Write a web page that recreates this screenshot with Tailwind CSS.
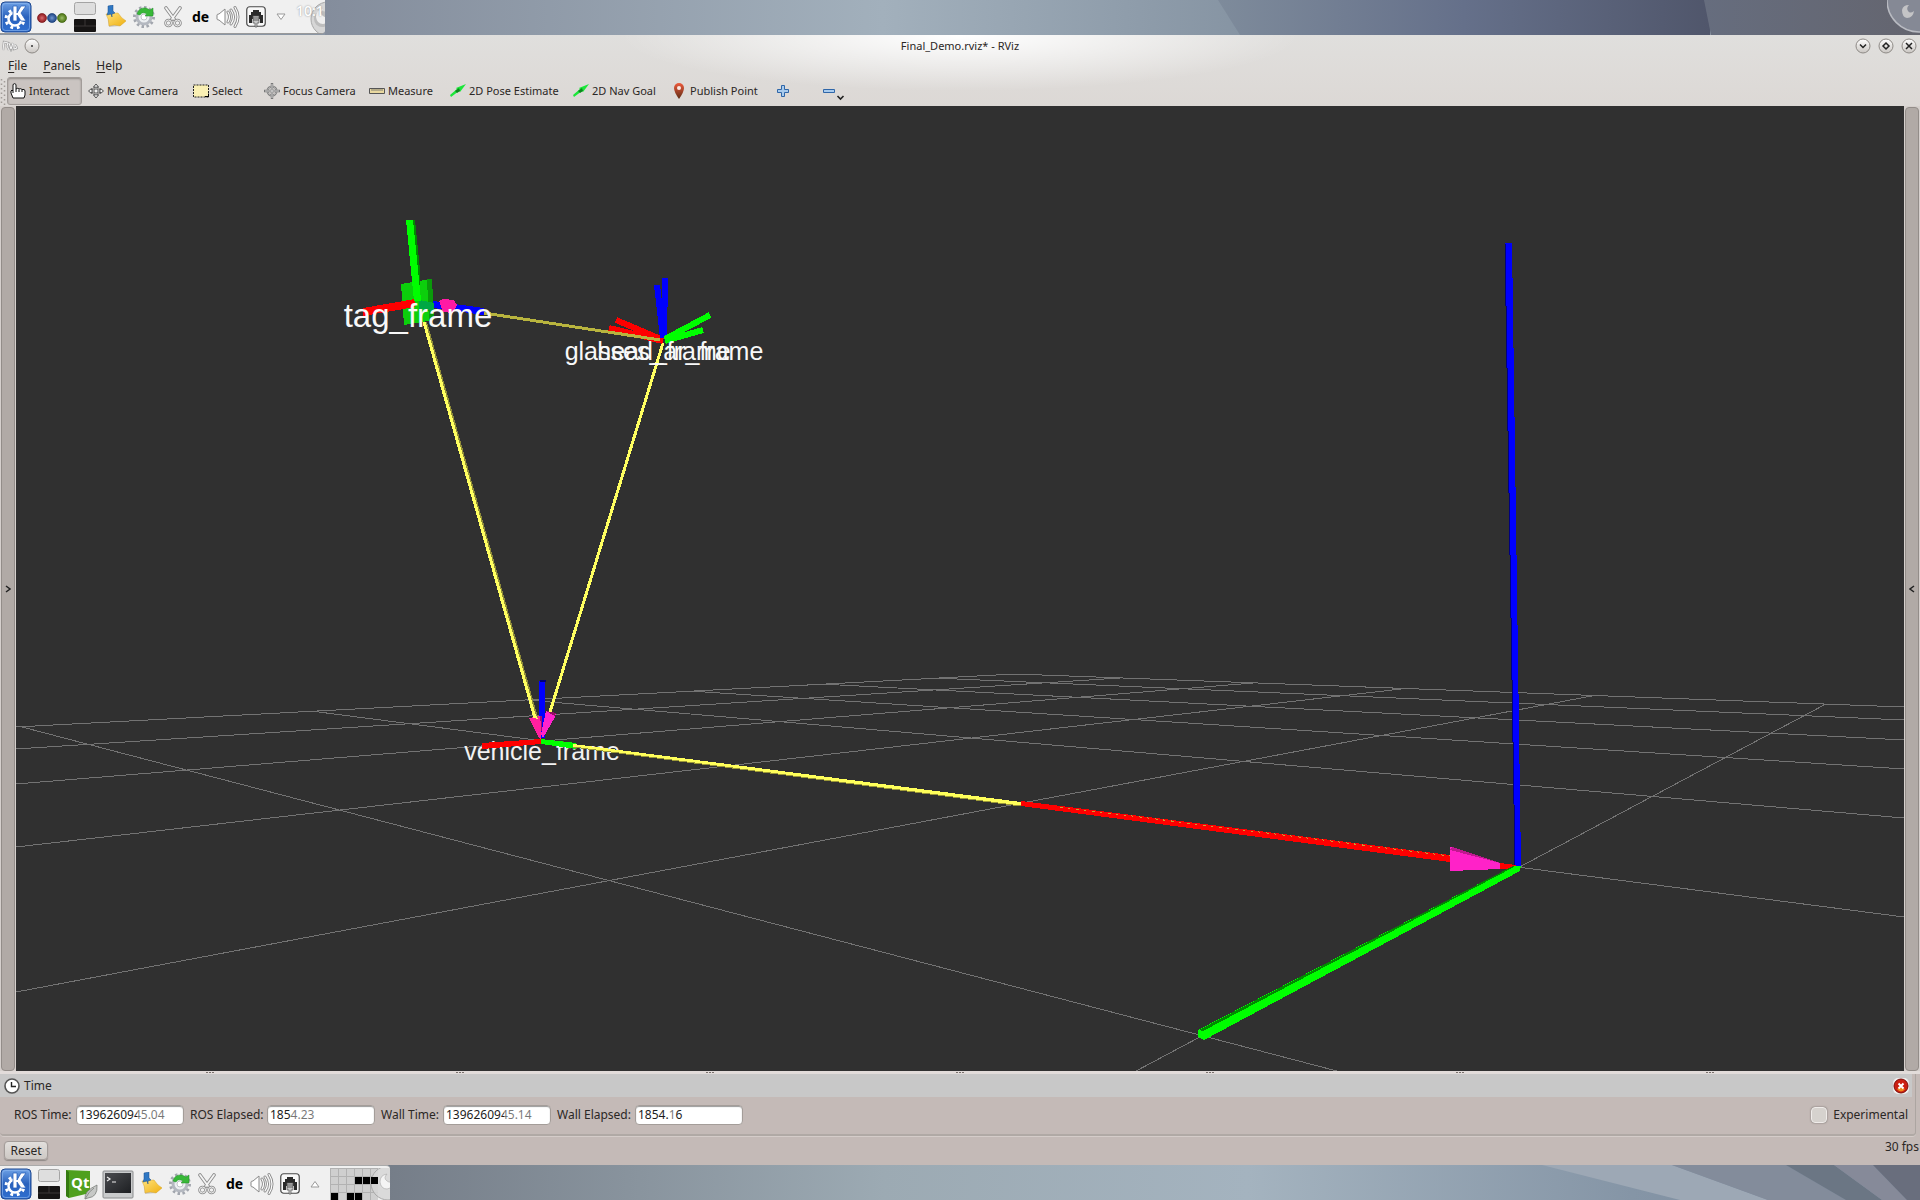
<!DOCTYPE html>
<html lang="en">
<head>
<meta charset="utf-8">
<title>Final_Demo.rviz* - RViz</title>
<script src="https://cdn.jsdelivr.net/npm/@tailwindcss/browser@4"></script>
</head>
<body class="flex h-screen flex-col overflow-hidden bg-[#c4bab7] font-['Noto_Sans',sans-serif] text-xs text-[#2b2725]">

<svg class="absolute size-0" aria-hidden="true">
  <defs>
    <linearGradient id="kblue" x1="0" y1="0" x2="0" y2="1"><stop offset="0" stop-color="#6fa2e6"/><stop offset=".5" stop-color="#2a62bd"/><stop offset="1" stop-color="#2f6fd0"/></linearGradient>
    <linearGradient id="note" x1="0" y1="0" x2="1" y2="1"><stop offset="0" stop-color="#ffe27a"/><stop offset="1" stop-color="#efb012"/></linearGradient>
    <linearGradient id="pin" x1="0" y1="0" x2="0" y2="1"><stop offset="0" stop-color="#ee5a3c"/><stop offset="1" stop-color="#5c2c14"/></linearGradient>
    <linearGradient id="term" x1="0" y1="0" x2="1" y2="1"><stop offset="0" stop-color="#4a4c50"/><stop offset="1" stop-color="#1d1f22"/></linearGradient>
    <linearGradient id="knob" x1="0" y1="0" x2="0" y2="1"><stop offset="0" stop-color="#ffffff"/><stop offset="1" stop-color="#c9c5c1"/></linearGradient>
    <radialGradient id="ball"><stop offset="0" stop-color="#fff" stop-opacity=".35"/><stop offset="1" stop-color="#000" stop-opacity=".25"/></radialGradient>
  </defs>
  <symbol id="kde" viewBox="0 0 32 32">
    <rect x="1" y="1" width="30" height="30" rx="4" fill="url(#kblue)" stroke="#1c468f"/>
    <rect x="2.500" y="2.500" width="27" height="27" rx="3" fill="none" stroke="#8fb9f0" stroke-opacity=".6"/>
    <circle cx="15" cy="18" r="6.500" fill="none" stroke="#fff" stroke-width="2.500" stroke-dasharray="44 16" stroke-dashoffset="-2" pathLength="60"/>
    <circle cx="15" cy="18" r="9" fill="none" stroke="#fff" stroke-width="3" stroke-dasharray="3 4 3 4 3 4 3 4 3 4 3 22" stroke-dashoffset="-3" pathLength="60"/>
    <path d="M13 5h4v7l4-7h5l-5 7 5 8h-5l-4-6v6h-4z" fill="#fff" stroke="#2a62bd" stroke-width=".8"/>
  </symbol>
  <symbol id="pager" viewBox="0 0 22 32">
    <rect x=".5" y="1.500" width="21" height="12" rx="2" fill="#dedede" stroke="#a4a4a4"/>
    <rect x="0" y="18" width="22" height="13" rx="1" fill="#161414"/>
    <path d="M11 18v7M0 25h22" stroke="#3a3636"/>
  </symbol>
  <symbol id="notes" viewBox="0 0 24 24">
    <path d="M4 14l18 1-6 6-11 1z" fill="#c9c9c9"/>
    <path d="M2 9l12-1q3 5 8 8l-6 5q-6-2-11 0 0-7-3-12z" fill="url(#note)" stroke="#dba520" stroke-width=".5"/>
    <path d="M4 1l5-1v6l2 2-3 1v3l-1-3-4 1 1-3z" fill="#2f78c4" stroke="#1a4f8c" stroke-width=".5"/>
  </symbol>
  <symbol id="gear" viewBox="0 0 24 24">
    <circle cx="12" cy="12" r="9.500" fill="none" stroke="#a2a6ae" stroke-width="3" stroke-dasharray="2.500 2.500" pathLength="60"/>
    <circle cx="12" cy="12" r="7" fill="#eceff2" stroke="#b4b8c0" stroke-width="3"/>
    <circle cx="12" cy="12" r="3" fill="#fff" stroke="#c0c4c8"/>
    <path d="M5 9q2-7 9-6l4 2 3-2v8h-8l2-2q-5-3-7 1z" fill="#38b838" stroke="#1f8f27" stroke-width=".5"/>
  </symbol>
  <symbol id="scissors" viewBox="0 0 18 22">
    <path d="M2 2l8 11M16 2L8 13" stroke="#8d8d8d" stroke-width="3.600" stroke-linecap="round"/>
    <path d="M2 2l8 11M16 2L8 13" stroke="#f4f4f4" stroke-width="1.800" stroke-linecap="round"/>
    <circle cx="4.500" cy="17" r="3" fill="none" stroke="#8d8d8d" stroke-width="2.600"/><circle cx="13.500" cy="17" r="3" fill="none" stroke="#8d8d8d" stroke-width="2.600"/>
    <circle cx="4.500" cy="17" r="3" fill="none" stroke="#f4f4f4"/><circle cx="13.500" cy="17" r="3" fill="none" stroke="#f4f4f4"/>
  </symbol>
  <symbol id="speaker" viewBox="0 0 24 24">
    <path d="M1 10q0-1 2-1l6-5v16l-6-5q-2 0-2-1z" fill="#fff" stroke="#8a8a8a"/>
    <path d="M12 7q3 5 0 10M15 5q5 7 0 14M19 2.500q6 9.500 0 19" fill="none" stroke="#8a8a8a" stroke-width="3" stroke-linecap="round"/>
    <path d="M12 7q3 5 0 10M15 5q5 7 0 14M19 2.500q6 9.500 0 19" fill="none" stroke="#fff" stroke-width="1.200" stroke-linecap="round"/>
  </symbol>
  <symbol id="ether" viewBox="0 0 20 22">
    <rect x=".75" y=".75" width="18.500" height="19.500" rx="3" fill="#f8f8f8" stroke="#4a4a4a" stroke-width="1.200"/>
    <path d="M3 9h2V6h2V4h6v2h2v3h2v8h-3v-4H6v4H3z" fill="#2b2b2b"/>
    <path d="M7 10h6v7h-2v4H9v-4H7z" fill="#c8c8c8" stroke="#555" stroke-width=".7"/>
    <path d="M7 12h6M7 14h6" stroke="#333" stroke-width=".7"/>
  </symbol>
  <symbol id="cashew" viewBox="0 0 28 40">
    <circle cx="24" cy="18" r="17" fill="#d6d6d6" stroke="#a8a8a8"/>
    <circle cx="18" cy="18" r="8" fill="#bdbdbd"/>
    <path d="M12 16q0-7 7-8-4 4 0 7t7-2q0 9-7 10-6 0-7-7z" fill="#efefef"/>
  </symbol>
  <symbol id="arrow" viewBox="0 0 16 16">
    <path d="M0 12l7-6-1-1L16 1l-6 8-1-1-8 6z" fill="#1ce63a"/>
    <path d="M5 8l4-3 1 3-3 2z" fill="#0a8a1c"/>
  </symbol>
</svg>

<header class="relative flex h-[35px] shrink-0 overflow-hidden bg-[#8b96a4]">
  <svg class="absolute inset-0 size-full" viewBox="0 0 1920 35" preserveAspectRatio="none" aria-hidden="true">
    <defs><linearGradient id="sky"><stop offset="0" stop-color="#7e8b9b"/><stop offset=".5" stop-color="#65708a"/><stop offset="1" stop-color="#50566b"/></linearGradient>
    <linearGradient id="sky2"><stop offset="0" stop-color="#666d7e"/><stop offset="1" stop-color="#64656f"/></linearGradient>
    <linearGradient id="sky0"><stop offset="0" stop-color="#848d9c"/><stop offset=".6" stop-color="#a2b0bc"/><stop offset="1" stop-color="#8593a2"/></linearGradient></defs>
    <rect x="325" width="930" height="35" fill="url(#sky0)"/>
    <path d="M1218 0H1710V35H1240Z" fill="url(#sky)"/>
    <path d="M1704 0H1920V35H1711Z" fill="url(#sky2)"/>
  </svg>
  <nav class="relative flex h-[34px] w-[325px] items-center overflow-hidden rounded-br border-b border-[#999] bg-[#f0f0f0]" aria-label="Top panel">
    <button class="size-8" aria-label="Application launcher"><svg class="size-8"><use href="#kde"/></svg></button>
    <button class="ml-1 h-8 w-8" aria-label="Activities"><svg class="h-8 w-8" viewBox="0 0 32 32"><g stroke-width=".6"><circle cx="6" cy="17" r="4.500" fill="#c8252b" stroke="#7d1216"/><circle cx="16" cy="17" r="4.500" fill="#2b62b8" stroke="#143c7c"/><circle cx="26" cy="17" r="4.500" fill="#6a9f1c" stroke="#3d6408"/></g><circle cx="6" cy="17" r="4.500" fill="url(#ball)"/><circle cx="16" cy="17" r="4.500" fill="url(#ball)"/><circle cx="26" cy="17" r="4.500" fill="url(#ball)"/></svg></button>
    <button class="ml-1.5 h-8 w-[22px]" aria-label="Desktop pager"><svg class="h-8 w-[22px]"><use href="#pager"/></svg></button>
    <button class="ml-2 size-6" aria-label="Notes"><svg class="size-6"><use href="#notes"/></svg></button>
    <button class="ml-1 size-6" aria-label="Updates"><svg class="size-6"><use href="#gear"/></svg></button>
    <button class="ml-2 h-[22px] w-[18px]" aria-label="Clipboard"><svg class="h-[22px] w-[18px]"><use href="#scissors"/></svg></button>
    <button class="ml-2.5 w-4 text-sm font-bold text-black" aria-label="Keyboard layout de">de</button>
    <button class="ml-2 size-6" aria-label="Volume"><svg class="size-6"><use href="#speaker"/></svg></button>
    <button class="ml-1.5 h-[22px] w-5" aria-label="Network"><svg class="h-[22px] w-5"><use href="#ether"/></svg></button>
    <button class="ml-2.5 h-2 w-2.5" aria-label="Show hidden icons"><svg class="h-2 w-2.5" viewBox="0 0 10 8"><path d="M1 1h8L5 6.500z" fill="#fff" stroke="#999"/></svg></button>
    <span class="relative ml-2.5 h-8 w-7 shrink-0">
      <svg class="absolute top-0 left-2 h-10 w-7"><use href="#cashew"/></svg>
      <span class="absolute top-0 left-0 text-sm font-medium text-white [text-shadow:0_0_2px_#888]">10:1</span>
    </span>
  </nav>
  <button class="relative ml-auto h-[35px] w-[33px]" aria-label="Panel toolbox"><svg class="h-[35px] w-[33px]" viewBox="0 0 33 35"><circle cx="32" cy="0" r="32" fill="#858995" stroke="#b9bbc2" stroke-width="1.500"/><path d="M15 10q1-5 7-5-3 3-1 6t6 0q-1 7-7 7-5-1-5-8z" fill="#c4c4c6"/></svg></button>
</header>

<section class="flex h-[71px] shrink-0 flex-col bg-[radial-gradient(ellipse_340px_56px_at_50%_0,#fff,#fff0),linear-gradient(#e0dfdd,#dcd8d5)]">
  <div class="grid h-[21px] shrink-0 grid-cols-[1fr_auto_1fr] items-center">
    <div class="flex items-center gap-1.5 pl-0.5">
      <svg class="h-3 w-4" viewBox="0 0 16 12" aria-hidden="true"><path d="M1 10l1-8 4 1-1 3 2 4M7 3l2 6 2-6M12 4v5l3-1-2-3" fill="none" stroke="#aaa" stroke-width="2.500"/><path d="M1 10l1-8 4 1-1 3 2 4M7 3l2 6 2-6M12 4v5l3-1-2-3" fill="none" stroke="#f4f4f4"/></svg>
      <button aria-label="Window menu"><svg class="size-4" viewBox="0 0 16 16"><circle cx="8" cy="8" r="7" fill="url(#knob)" stroke="#8e8a86"/><circle cx="8" cy="8" r="1" fill="#333"/></svg></button>
    </div>
    <h1 class="pt-0.5 text-[11px]">Final_Demo.rviz* - RViz</h1>
    <div class="flex justify-end gap-[7px] pr-[3px]">
      <button aria-label="Minimize"><svg class="size-4" viewBox="0 0 16 16"><circle cx="8" cy="8" r="7" fill="url(#knob)" stroke="#8e8a86"/><path d="M5 6.500l3 3 3-3" fill="none" stroke="#222" stroke-width="1.500"/></svg></button>
      <button aria-label="Maximize"><svg class="size-4" viewBox="0 0 16 16"><circle cx="8" cy="8" r="7" fill="url(#knob)" stroke="#8e8a86"/><path d="M8 5l3 3-3 3-3-3z" fill="none" stroke="#222" stroke-width="1.500"/></svg></button>
      <button aria-label="Close"><svg class="size-4" viewBox="0 0 16 16"><circle cx="8" cy="8" r="7" fill="url(#knob)" stroke="#8e8a86"/><path d="M5 5l6 6M11 5l-6 6" stroke="#222" stroke-width="1.500"/></svg></button>
    </div>
  </div>
  <nav class="flex h-5 shrink-0 items-center gap-4 pl-2 leading-5" aria-label="Menu bar">
    <button><span class="underline underline-offset-2">F</span>ile</button>
    <button><span class="underline underline-offset-2">P</span>anels</button>
    <button><span class="underline underline-offset-2">H</span>elp</button>
  </nav>
  <div class="flex h-[30px] shrink-0 items-center text-[11px]" role="toolbar" aria-label="Tools">
    <svg class="h-7 w-[7px] shrink-0" viewBox="0 0 7 28" aria-hidden="true"><path d="M1.500 2v26M4.500 4v24" stroke="#a19b97" stroke-width="1.500" stroke-dasharray="1.500 3"/></svg>
    <button class="mr-[3px] flex h-7 w-[75px] items-center gap-[3px] rounded-[3px] border border-[#a29c99] bg-[#cac4c1] pl-0.5 shadow-[inset_0_1px_2px_#8f8986]"><svg class="size-4" viewBox="0 0 16 16"><path d="M3 15l-2-5V8l1-1 1 1V1.500Q5-.3 6 1.500V6q2-1.500 3 0 2-.8 3 .5 3-.8 3 1.500v4l-1 3z" fill="#fff" stroke="#111"/><path d="M3 8v2M6 6v3M9 6.500v2.500M12 7v2" stroke="#111"/></svg>Interact</button>
    <button class="flex h-7 w-[105px] items-center gap-[3px] pl-[3px]"><svg class="size-4" viewBox="0 0 16 16"><path d="M8 1l2.500 3H9v3h3.500V5.500L15.500 8l-3 2.500V9H9v3h1.500L8 15l-2.500-3H7V9H3.500v1.500L.5 8l3-2.500V7H7V4H5.500z" fill="#eee" stroke="#555"/><circle cx="8" cy="8" r="4" fill="none" stroke="#666" stroke-width=".9"/></svg>Move Camera</button>
    <button class="flex h-7 w-[71px] items-center gap-[3px] pl-[3px]"><svg class="size-4" viewBox="0 0 16 16"><path d="M.5 2h15v12H.5z" fill="#faf0b4" stroke="#222" stroke-dasharray="2 1"/><path d="M12 14h4v-4l-1 1v2h-3z" fill="#000"/></svg>Select</button>
    <button class="flex h-7 w-[105px] items-center gap-[3px] pl-[3px]"><svg class="size-4" viewBox="0 0 16 16"><circle cx="8" cy="8" r="4.500" fill="none" stroke="#777" stroke-width="2"/><circle cx="8" cy="8" r="4.500" fill="none" stroke="#ddd" stroke-width=".6"/><path d="M8 0v16M0 8h16" stroke="#777" stroke-width="2.400"/><path d="M8 1v14M1 8h14" stroke="#eee" stroke-width=".8"/></svg>Focus Camera</button>
    <button class="flex h-7 w-[81px] items-center gap-[3px] pl-[3px]"><svg class="size-4" viewBox="0 0 16 16"><path d="M.5 5.500h15v5H.5z" fill="#ead9a0" stroke="#555"/><path d="M3 6v2M5 6v2M7 6v2M9 6v2M11 6v2M13 6v2" stroke="#666" stroke-width=".8"/></svg>Measure</button>
    <button class="flex h-7 w-[123px] items-center gap-[3px] pl-[3px]"><svg class="size-4"><use href="#arrow"/></svg>2D Pose Estimate</button>
    <button class="flex h-7 w-[98px] items-center gap-[3px] pl-[3px]"><svg class="size-4"><use href="#arrow"/></svg>2D Nav Goal</button>
    <button class="flex h-7 w-[104px] items-center gap-[3px] pl-[3px]"><svg class="size-4" viewBox="0 0 16 16"><path d="M8 16Q3 9 3 5a5 5 0 0 1 10 0q0 4-5 11z" fill="url(#pin)"/><circle cx="8" cy="5" r="2" fill="#fbe9e4"/></svg>Publish Point</button>
    <button class="flex h-7 w-[46px] items-center pl-[3px]" aria-label="Add tool"><svg class="size-4" viewBox="0 0 16 16"><path d="M6.500 2.500h3v4h4v3h-4v4h-3v-4h-4v-3h4z" fill="#a8cbee" stroke="#2f66a8"/></svg></button>
    <button class="flex h-7 w-8 items-center pl-[3px]" aria-label="Remove tool"><svg class="h-5 w-6" viewBox="0 0 24 20"><path d="M2.500 8.500h11v3h-11z" fill="#a8cbee" stroke="#2f66a8"/><path d="M16.500 15l3 3 3-3" fill="none" stroke="#222" stroke-width="1.600"/></svg></button>
  </div>
</section>

<main class="flex min-h-0 flex-1 bg-[#d6d0cd]">
  <button class="flex w-4 shrink-0 items-center justify-center px-px pt-px" aria-label="Show left panels"><span class="flex size-full items-center justify-center rounded border border-[#938d89] bg-[#b1aaa6]"><svg class="h-2 w-1.5" viewBox="0 0 6 8"><path d="M1 1l4 3-4 3" fill="none" stroke="#222" stroke-width="1.500"/></svg></span></button>
  <svg class="h-full min-w-0 flex-1 bg-[#303030]" viewBox="16 106 1888 965" preserveAspectRatio="xMidYMid slice" role="img" aria-label="3D view of the coordinate frames">
    <g stroke="#737373" fill="none" shape-rendering="crispEdges">
      <path d="M16 727L1015 674M16 749L1120 678M16 784L1253 683M16 847L1410 688M16 992L1597 695M1136 1071L1826 704"/>
      <path d="M1015 674L1904 707M934 678L1904 720M820 684L1904 740M689 691L1904 769M527 700L1904 818M311 711L1904 917M22 727L1337 1071"/>
    </g>
    <g class="font-['Liberation_Sans',sans-serif]" fill="#f2f2f2" text-anchor="middle">
      <text x="542" y="760" font-size="25">vehicle_frame</text>
    </g>
    <g shape-rendering="crispEdges">
      <path d="M425 322L536 718" stroke="#8f8c38" stroke-width="4"/>
      <path d="M424 322L535 718" stroke="#ffff60" stroke-width="3"/>
      <path d="M663 343L550 712" stroke="#ffff60" stroke-width="3"/>
      <path d="M539 681h6v57h-6z" fill="#0000fe"/><path d="M540 680h6v2h-6z" fill="#000070"/>
      <path d="M529 718L541 716V740L539 738Z" fill="#ff1fa0"/><path d="M540 716h2v20z" fill="#a01070"/>
      <path d="M546 711L556 713 555 717 543 738 541 734Z" fill="#ff22cc"/><path d="M546 711L556 713 555 716Z" fill="#901060"/>
      <path d="M533 718l2-5 3 6z" fill="#ffff60"/>
      <path d="M482 743L541 739V744L482 749Z" fill="#fe0000"/>
      <path d="M541 739L576 743V749L541 744Z" fill="#00fe00"/>
      <path d="M573 744L1021 802V806L573 747Z" fill="#ffff5a"/><path d="M573 747L1021 806" stroke="#9c9838"/>
      <path d="M1021 801L1450 855V862L1021 806Z" fill="#fe0000"/>
      <path d="M1060 807L1450 856" stroke="#c9a030" stroke-dasharray="3 5 2 6"/>
      <path d="M1505 243H1512L1521 866H1515Z" fill="#0000fe"/><path d="M1505 243L1515 866" stroke="#000080"/>
      <path d="M1500 863L1516 865 1515 870 1500 869Z" fill="#fe0000"/>
      <path d="M1450 847L1500 863V869L1450 871Z" fill="#ff22c8"/><path d="M1452 847L1500 863 1450 850Z" fill="#c01890"/>
      <path d="M1513 866L1521 866 1520 871 1204 1040 1198 1037V1030Z" fill="#00fe00"/><path d="M1513 866L1199 1030 1203 1031 1514 867Z" fill="#008a00"/>
    </g>
    <g shape-rendering="crispEdges">
      <path d="M433 301L484 308V315L433 308Z" fill="#0000fe"/>
      <path d="M401 284L431 279 434 320 404 325Z" fill="#0ccf0c"/><path d="M427 279L432 279 434 320 429 321Z" fill="#0a9a0a"/>
      <path d="M419 300L434 303V311L419 309Z" fill="#00a844"/>
      <path d="M363 308L415 299V307L363 316Z" fill="#fe0000"/>
      <path d="M406 220H414L421 301H414Z" fill="#00fe00"/><path d="M413 220H415L420 270V290Z" fill="#008a00"/>
      <path d="M439 301L443 299 454 300 457 305 453 313 443 312Z" fill="#ff1aa4"/>
      <path d="M484 313L660 340" stroke="#b8b43e" stroke-width="3"/>
      <path d="M616 320L663 340M609 328L663 341" stroke="#fe0000" stroke-width="6"/>
      <path d="M609 332L660 340" stroke="#b8b43e" stroke-width="3"/>
      <path d="M665 278L664 338M657 285L663 338" stroke="#0000fe" stroke-width="6"/>
      <path d="M710 315L665 339M703 330L665 341" stroke="#00fe00" stroke-width="6"/>
    </g>
    <g class="font-['Liberation_Sans',sans-serif]" fill="#f8f8f8" text-anchor="middle">
      <text x="418" y="327" font-size="33">tag_frame</text>
      <text x="664" y="360" font-size="25">glasses_ar_frame</text>
      <text x="664" y="360" font-size="25">head_frame</text>
    </g>
  </svg>
  <button class="flex w-4 shrink-0 items-center justify-center px-px pt-px" aria-label="Show right panels"><span class="flex size-full items-center justify-center rounded border border-[#938d89] bg-[#b1aaa6]"><svg class="h-2 w-1.5" viewBox="0 0 6 8"><path d="M5 1L1 4l4 3" fill="none" stroke="#222" stroke-width="1.500"/></svg></span></button>
</main>

<svg class="h-[3px] w-full shrink-0 bg-[#e2dcda]" aria-hidden="true"><defs><pattern id="grips" x="85" width="250" height="3" patternUnits="userSpaceOnUse"><path d="M121 1h2v1h-2zM124 1h2v1h-2zM127 1h2v1h-2z" fill="#77706c"/></pattern></defs><rect width="100%" height="3" fill="url(#grips)"/></svg>

<section class="shrink-0" aria-label="Time panel">
  <div class="mr-1 rounded-b border-r border-b-2 border-[#aca5a1] border-b-[#b0a9a5] pr-[3px] shadow-[0_1px_0_#d4ccc9]">
    <div class="flex h-[23px] items-center bg-[#c8c8c8] pr-[3px] pl-1">
      <svg class="size-4" viewBox="0 0 16 16" aria-hidden="true"><circle cx="8" cy="8" r="7" fill="#fff" stroke="#555" stroke-width="1.600"/><path d="M7.500 4v4.500H12" fill="none" stroke="#222" stroke-width="1.400"/></svg>
      <h2 class="ml-1">Time</h2>
      <button class="ml-auto" aria-label="Close panel"><svg class="size-4" viewBox="0 0 16 16"><rect x="0" y="0" width="16" height="16" rx="5" fill="#eee"/><circle cx="8" cy="8" r="7" fill="#cc1f12" stroke="#7c0c08"/><path d="M4 11q4-3 8 0-4 5-8 0z" fill="#f08a1c"/><path d="M5.500 5.500l5 5M10.500 5.500l-5 5" stroke="#fff" stroke-width="2"/></svg></button>
    </div>
    <form class="flex h-[37px] items-center pb-0.5 pl-3.5">
      <label for="rt" class="w-[62px]">ROS Time:</label>
      <span class="relative mr-1.5 flex"><input id="rt" value="1396260945.04" class="h-5 w-[108px] rounded border border-[#a49d99] bg-white pl-0.5 text-[#1c1c1c] shadow-[inset_0_1px_1px_#999]"><i class="absolute top-1 left-[61px] h-3 w-7 bg-white/40"></i></span>
      <label for="re" class="w-[77px]">ROS Elapsed:</label>
      <span class="relative mr-1.5 flex"><input id="re" value="1854.23" class="h-5 w-[108px] rounded border border-[#a49d99] bg-white pl-0.5 text-[#1c1c1c] shadow-[inset_0_1px_1px_#999]"><i class="absolute top-1 left-6 h-3 w-7 bg-white/40"></i></span>
      <label for="wt" class="w-[62px]">Wall Time:</label>
      <span class="relative mr-1.5 flex"><input id="wt" value="1396260945.14" class="h-5 w-[108px] rounded border border-[#a49d99] bg-white pl-0.5 text-[#1c1c1c] shadow-[inset_0_1px_1px_#999]"><i class="absolute top-1 left-[61px] h-3 w-7 bg-white/40"></i></span>
      <label for="we" class="w-[78px]">Wall Elapsed:</label>
      <span class="relative flex"><input id="we" value="1854.16" class="h-5 w-[108px] rounded border border-[#a49d99] bg-white pl-0.5 text-[#1c1c1c] shadow-[inset_0_1px_1px_#999]"><i class="absolute top-1 left-[34px] h-3 w-1.5 bg-white/40"></i></span>
      <label class="mr-1 ml-auto flex items-center gap-1.5"><input type="checkbox" class="size-4 appearance-none rounded border border-[#f0ecea] bg-[#d6d2ce] shadow-[0_0_2px_#6f6966]">Experimental</label>
    </form>
  </div>
  <div class="flex h-[29px] justify-between pr-px pl-1">
    <button class="mt-[5px] h-[19px] w-11 rounded border border-[#a39c99] bg-linear-to-b from-[#e2dfdc] to-[#cdc8c4] leading-4 shadow-[0_1px_1px_#8f8986]">Reset</button>
    <output class="pt-px leading-5">30 fps</output>
  </div>
</section>

<footer class="relative flex h-[35px] shrink-0 overflow-hidden bg-[#8a95a3]">
  <svg class="absolute inset-0 size-full" viewBox="0 1165 1920 35" preserveAspectRatio="none" aria-hidden="true">
    <defs><linearGradient id="g1"><stop offset="0" stop-color="#6c737d"/><stop offset=".2" stop-color="#757d88"/><stop offset=".46" stop-color="#9caab3"/><stop offset=".65" stop-color="#a4b3bf"/><stop offset=".85" stop-color="#8595a6"/><stop offset="1" stop-color="#7a889b"/></linearGradient></defs>
    <path d="M0 1165H1920V1200H0Z" fill="url(#g1)"/>
    <path d="M1542 1165H1672L1768 1200H1680Z" fill="#9da8b5"/>
    <path d="M1672 1165H1786L1846 1200H1768Z" fill="#838c9b"/>
    <path d="M1786 1165H1834L1882 1200H1846Z" fill="#6b7684"/>
    <path d="M1834 1165H1873L1907 1200H1882Z" fill="#868a99"/>
    <path d="M1873 1165H1920V1200H1907Z" fill="#696e7d"/>
  </svg>
  <nav class="relative flex h-[35px] w-[390px] items-center overflow-hidden rounded-tr border-t border-[#aaa] bg-[#f0f0f0] pt-0.5" aria-label="Bottom panel">
    <button class="size-8" aria-label="Application launcher"><svg class="size-8"><use href="#kde"/></svg></button>
    <button class="ml-1.5 h-8 w-[22px]" aria-label="Desktop pager"><svg class="h-8 w-[22px]"><use href="#pager"/></svg></button>
    <button class="ml-1.5 size-8" aria-label="Qt Creator"><svg class="size-8" viewBox="0 0 32 32"><path d="M0 2l24 1v22L3 30 0 28z" fill="#4fa01e"/><path d="M0 2l3 2v26l-3-2z" fill="#347a10"/><text x="5" y="20" font-size="15" font-weight="700" fill="#fff" class="font-['Open_Sans',sans-serif]">Qt</text><path d="M19 31q-1-8 12-14 1 12-9 13z" fill="#c6c8c6" stroke="#707470" stroke-width=".7"/><path d="M19 31q4-8 9-11" fill="none" stroke="#8a8e8a"/></svg></button>
    <button class="ml-1 size-8" aria-label="Terminal"><svg class="size-8" viewBox="0 0 32 32"><rect x="1" y="3" width="30" height="27" rx="1" fill="#c9cbcc" stroke="#8a8c8e"/><rect x="3" y="5" width="26" height="20" fill="url(#term)"/><path d="M5 9l3 2-3 2M10 14h4" fill="none" stroke="#eee" stroke-width="1.200"/></svg></button>
    <button class="ml-1.5 size-6" aria-label="Notes"><svg class="size-6"><use href="#notes"/></svg></button>
    <button class="ml-1 size-6" aria-label="Updates"><svg class="size-6"><use href="#gear"/></svg></button>
    <button class="ml-1.5 h-[22px] w-[18px]" aria-label="Clipboard"><svg class="h-[22px] w-[18px]"><use href="#scissors"/></svg></button>
    <button class="ml-2.5 w-4 text-sm font-bold text-black" aria-label="Keyboard layout de">de</button>
    <button class="ml-2 size-6" aria-label="Volume"><svg class="size-6"><use href="#speaker"/></svg></button>
    <button class="ml-1.5 h-[22px] w-5" aria-label="Network"><svg class="h-[22px] w-5"><use href="#ether"/></svg></button>
    <button class="ml-2.5 h-2 w-2.5" aria-label="Show hidden icons"><svg class="h-2 w-2.5" viewBox="0 0 10 8"><path d="M1 7h8L5 1.500z" fill="#fff" stroke="#999"/></svg></button>
    <svg class="ml-2.5 h-8 w-[60px] shrink-0 self-end" viewBox="0 0 60 32" aria-hidden="true"><path d="M0 0h48v32H0z" fill="#cfcfcf"/><path d="M0 .5h48M0 8.500h48M0 16.500h48M0 24.500h48M.5 0v32M8.500 0v32M16.500 0v32M24.500 0v32M32.500 0v32M40.500 0v32" stroke="#b2b2b2"/><circle cx="58" cy="15" r="17" fill="#d6d6d6" fill-opacity=".85" stroke="#a8a8a8"/><path d="M25 9h7v7h-7zM33 9h7v7h-7zM41 9h7v7h-7zM1 25h7v7H1zM17 25h7v7h-7zM25 25h7v7h-7z" fill="#000"/><path d="M50 14q0-7 7-8-4 4 0 7t7-2q0 9-7 10-6 0-7-7z" fill="#f4f4f4" stroke="#aaa" stroke-width=".6"/></svg>
  </nav>
</footer>
</body>
</html>
